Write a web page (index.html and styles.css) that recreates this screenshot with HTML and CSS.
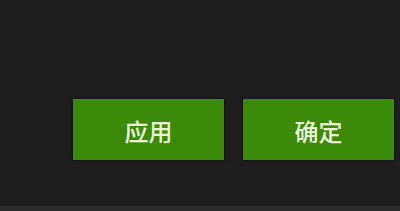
FILE: index.html
```html
<!DOCTYPE html>
<html lang="zh-CN">
<head>
    <meta charset="UTF-8">
    <meta name="viewport" content="width=device-width, initial-scale=1.0">
    <title>设置</title>
    <link rel="stylesheet" href="styles.css">
</head>
<body>
    <div class="panel">
        <div class="actions">
            <button class="btn">应用</button>
            <button class="btn">确定</button>
        </div>
    </div>
</body>
</html>
```

FILE: styles.css
```css
html, body {
    margin: 0;
    padding: 0;
}
body {
    background: #1e1e1f;
    font-family: "Noto Sans CJK SC", "Microsoft YaHei", sans-serif;
    width: 400px;
    height: 211px;
    overflow: hidden;
}
.panel {
    height: 206px;
    border-bottom: 5px solid #2b2b2c;
    box-sizing: content-box;
}
.actions {
    display: flex;
    gap: 19px;
    padding: 99px 0 0 73px;
}
.btn {
    width: 151px;
    height: 61px;
    background: #3b8a0b;
    color: #eaf6d8;
    border: none;
    border-radius: 0;
    font-family: inherit;
    font-size: 24px;
    font-weight: 500;
    line-height: 1;
    padding: 2px 0 0;
    box-shadow: 0 0 3px rgba(0, 0, 0, 0.6);
}
```
